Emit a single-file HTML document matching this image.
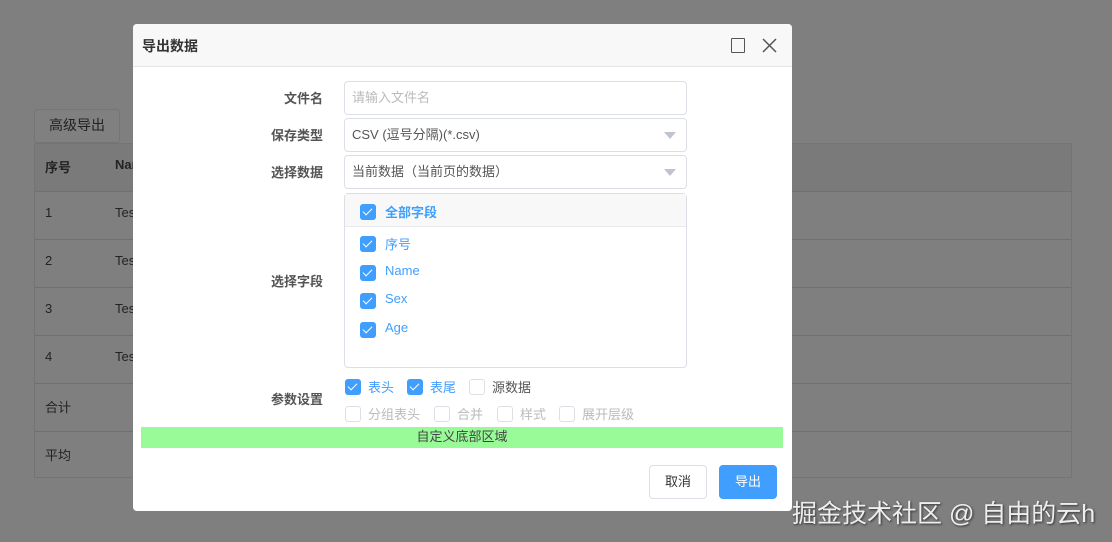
<!DOCTYPE html>
<html><head><meta charset="utf-8"><style>
*{box-sizing:border-box;margin:0;padding:0}
body{width:1112px;height:542px;overflow:hidden;background:#7f7f7f;font-family:"Liberation Sans","Noto Sans CJK SC",sans-serif;font-size:13px;position:relative}
.a{position:absolute}
.btn0{left:34px;top:109px;width:86px;height:34px;border:1px solid #757575;border-radius:3px;background:#808080;color:#222;font-size:14px;text-align:center;line-height:30px}
.tbl{left:34px;top:143px;width:1038px;height:335px;border:1px solid #747474}
.row{position:absolute;left:0;width:1036px;height:48px;border-bottom:1px solid #707070;color:#232323;font-size:13px}
.row span{position:absolute;top:13px}
.dlg{left:133px;top:24px;width:659px;height:487px;background:#fff;border-radius:4px;overflow:hidden}
.hd{left:0;top:0;width:659px;height:43px;background:#f8f8f8;border-bottom:1px solid #e4e4e4}
.lbl{position:absolute;width:120px;left:70px;text-align:right;font-weight:bold;color:#555;font-size:13px}
.inp{position:absolute;left:211px;width:343px;height:34px;border:1px solid #dcdfe6;border-radius:4px;padding-left:7px;line-height:31px;color:#555;font-size:13px}
.tri{position:absolute;right:10px;top:13px;width:0;height:0;border-left:6px solid transparent;border-right:6px solid transparent;border-top:7px solid #c0c4cc}
.cb{position:absolute;width:16px;height:16px;border-radius:3px;background:#409eff}
.cb:after{content:"";position:absolute;left:5px;top:2px;width:4px;height:8px;border:solid #fff;border-width:0 1.5px 1.5px 0;transform:rotate(45deg)}
.ub{position:absolute;width:16px;height:16px;border-radius:3px;border:1px solid #dcdfe6;background:#fff}
.t{position:absolute;font-size:13px;color:#409eff}
</style></head><body>
<div class="a btn0">高级导出</div>
<div class="a tbl">
<div class="row" style="top:0;background:#7a7a7a"><span style="left:10px;font-weight:bold">序号</span><span style="left:80px;font-weight:bold">Name</span></div>
<div class="row" style="top:48px"><span style="left:10px">1</span><span style="left:80px">Test1</span></div>
<div class="row" style="top:96px"><span style="left:10px">2</span><span style="left:80px">Test2</span></div>
<div class="row" style="top:144px"><span style="left:10px">3</span><span style="left:80px">Test3</span></div>
<div class="row" style="top:192px"><span style="left:10px">4</span><span style="left:80px">Test4</span></div>
<div class="row" style="top:240px"><span style="left:10px">合计</span></div>
<div class="row" style="top:288px;border-bottom:none"><span style="left:10px">平均</span></div>
</div>
<div class="a" style="left:792px;top:494px;font-size:25px;color:#eee;text-shadow:1px 1px 2px #333;white-space:nowrap">掘金技术社区 @ 自由的云h</div>

<div class="a dlg">
<div class="a hd"><span style="position:absolute;left:9px;top:12px;font-size:14px;font-weight:bold;color:#333">导出数据</span>
<div style="position:absolute;left:598px;top:14px;width:14px;height:15px;border:1.5px solid #555;border-radius:1px"></div>
<svg style="position:absolute;left:629px;top:14px" width="15" height="15"><path d="M1 1L14 14M14 1L1 14" stroke="#555" stroke-width="1.5"/></svg>
</div>
<div class="lbl" style="top:64px">文件名</div>
<div class="inp" style="top:57px;color:#bbb">请输入文件名</div>
<div class="lbl" style="top:101px">保存类型</div>
<div class="inp" style="top:94px">CSV (逗号分隔)(*.csv)<div class="tri"></div></div>
<div class="lbl" style="top:138px">选择数据</div>
<div class="inp" style="top:131px">当前数据（当前页的数据）<div class="tri"></div></div>
<div class="lbl" style="top:247px">选择字段</div>
<div style="position:absolute;left:211px;top:169px;width:343px;height:175px;border:1px solid #dcdfe6;border-radius:4px">
<div style="position:absolute;left:0;top:0;width:341px;height:33px;background:#f8f8f9;border-bottom:1px solid #e8eaec"></div>
<div class="cb" style="left:15px;top:10px"></div><div class="t" style="left:40px;top:8px;font-weight:bold">全部字段</div>
<div class="cb" style="left:15px;top:42px"></div><div class="t" style="left:40px;top:40px">序号</div>
<div class="cb" style="left:15px;top:71px"></div><div class="t" style="left:40px;top:69px">Name</div>
<div class="cb" style="left:15px;top:99px"></div><div class="t" style="left:40px;top:97px">Sex</div>
<div class="cb" style="left:15px;top:128px"></div><div class="t" style="left:40px;top:126px">Age</div>
</div>
<div class="lbl" style="top:365px">参数设置</div>
<div class="cb" style="left:212px;top:355px"></div><div class="t" style="left:235px;top:353px">表头</div>
<div class="cb" style="left:274px;top:355px"></div><div class="t" style="left:297px;top:353px">表尾</div>
<div class="ub" style="left:336px;top:355px"></div><div class="t" style="left:359px;top:353px;color:#555">源数据</div>
<div class="ub" style="left:212px;top:382px"></div><div class="t" style="left:235px;top:380px;color:#bbb">分组表头</div>
<div class="ub" style="left:301px;top:382px"></div><div class="t" style="left:324px;top:380px;color:#bbb">合并</div>
<div class="ub" style="left:364px;top:382px"></div><div class="t" style="left:387px;top:380px;color:#bbb">样式</div>
<div class="ub" style="left:426px;top:382px"></div><div class="t" style="left:449px;top:380px;color:#bbb">展开层级</div>
<div style="position:absolute;left:8px;top:403px;width:642px;height:21px;background:#98fb98;text-align:center;line-height:20px;color:#444;font-size:13px">自定义底部区域</div>
<div style="position:absolute;left:516px;top:441px;width:58px;height:34px;border:1px solid #dcdfe6;border-radius:4px;text-align:center;line-height:31px;color:#333">取消</div>
<div style="position:absolute;left:586px;top:441px;width:58px;height:34px;background:#409eff;border-radius:4px;text-align:center;line-height:33px;color:#fff">导出</div>
</div>
</body></html>
